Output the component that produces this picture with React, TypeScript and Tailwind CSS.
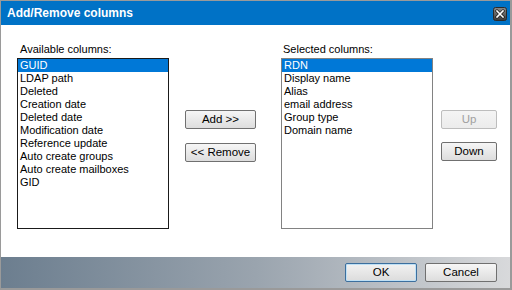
import React from "react";

const avail = [
  "GUID",
  "LDAP path",
  "Deleted",
  "Creation date",
  "Deleted date",
  "Modification date",
  "Reference update",
  "Auto create groups",
  "Auto create mailboxes",
  "GID",
];
const selected = ["RDN", "Display name", "Alias", "email address", "Group type", "Domain name"];

function Btn({ label, w, disabled, def }: { label: string; w: string; disabled?: boolean; def?: boolean }) {
  const cls = disabled
    ? "border-[#bdbdbd] text-[#a0a0a0] bg-gradient-to-b from-[#f4f4f4] to-[#ececec]"
    : def
    ? "border-[#3c6f9e] text-black bg-gradient-to-b from-[#f2f2f2] to-[#dcdcdc] shadow-[inset_0_0_0_1px_#bfe0f5]"
    : "border-[#707070] text-black bg-gradient-to-b from-[#f6f6f6] to-[#dddddd]";
  return (
    <div
      className={`${w} h-[19px] border rounded-[2px] flex items-center justify-center text-[11.5px] leading-none ${cls}`}
    >
      {label}
    </div>
  );
}

function ListBox({ items, dark }: { items: string[]; dark?: boolean }) {
  return (
    <div
      className={`w-[152px] h-[171px] bg-white border ${dark ? "border-[#1a1a1a]" : "border-[#828282]"} flex flex-col`}
    >
      {items.map((it, i) => (
        <div
          key={it}
          className={`h-[13px] leading-[13px] pl-[2px] text-[11px] whitespace-nowrap ${
            i === 0 ? "bg-[#0078d7] text-white" : "text-black"
          }`}
        >
          {it}
        </div>
      ))}
    </div>
  );
}

export default function App() {
  return (
    <div
      className="w-[512px] h-[290px] border-l border-t border-r-2 border-b-2 border-[#9a9a9a] flex flex-col bg-white"
      style={{ fontFamily: '"Liberation Sans", Arial, sans-serif' }}
    >
      <div className="h-[24px] bg-[#0072c6] flex items-center justify-between pl-[6px] pr-[3px]">
        <span className="text-white font-bold text-[12px] leading-none">Add/Remove columns</span>
        <svg width="14" height="14" viewBox="0 0 14 14" className="mt-[1px]">
          <defs>
            <linearGradient id="cg" x1="0" y1="0" x2="0" y2="1">
              <stop offset="0" stopColor="#8a8a8a" />
              <stop offset="1" stopColor="#3a3a3a" />
            </linearGradient>
          </defs>
          <rect x="0.5" y="0.5" width="13" height="13" rx="2" fill="url(#cg)" stroke="#2a2a2a" />
          <path d="M4 4 L10 10 M10 4 L4 10" stroke="#1a1a1a" strokeWidth="3" strokeLinecap="square" />
          <path d="M4 4 L10 10 M10 4 L4 10" stroke="#ffffff" strokeWidth="1.6" strokeLinecap="square" />
        </svg>
      </div>
      <div className="flex-1 flex pl-[16px] pt-[18px]">
        <div className="flex flex-col">
          <div className="text-[11px] leading-[13px] pl-[3px] h-[15px] text-black">Available columns:</div>
          <ListBox items={avail} dark />
        </div>
        <div className="flex flex-col ml-[16px] pt-[67px] gap-[14px]">
          <Btn label="Add >>" w="w-[71px]" />
          <Btn label="<< Remove" w="w-[71px]" />
        </div>
        <div className="flex flex-col ml-[25px]">
          <div className="text-[11px] leading-[13px] pl-[2px] h-[15px] text-black">Selected columns:</div>
          <ListBox items={selected} />
        </div>
        <div className="flex flex-col ml-[8px] pt-[67px] gap-[13px]">
          <Btn label="Up" w="w-[56px]" disabled />
          <Btn label="Down" w="w-[56px]" />
        </div>
      </div>
      <div className="h-[31px] bg-gradient-to-r from-[#6c7e8f] via-[#9aa4ae] to-[#d8d9db] flex justify-end items-start pt-[6px] pr-[13px] gap-[8px]">
        <Btn label="OK" w="w-[72px]" def />
        <Btn label="Cancel" w="w-[72px]" />
      </div>
    </div>
  );
}
